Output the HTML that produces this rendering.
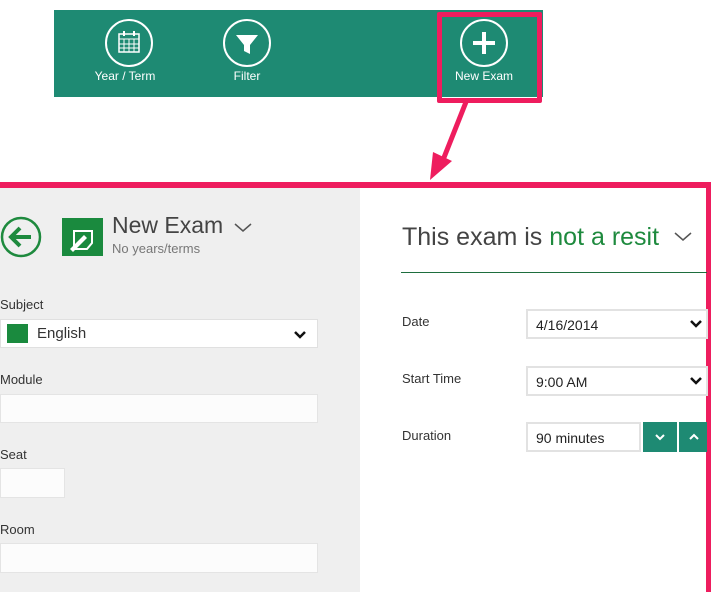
<!DOCTYPE html>
<html><head><style>
*{margin:0;padding:0;box-sizing:border-box}
body{width:711px;height:592px;overflow:hidden;background:#fff;font-family:"Liberation Sans",sans-serif;position:relative}
.a{position:absolute}
.lbl{font-size:13px;color:#333}
.fld{background:#fcfcfc;border:1px solid #e4e4e4}
.sel{background:#fff;border:2px solid #e2e2e2;font-size:14px;color:#222;padding:6px 8px}
.tb{color:#fff;font-size:12px;text-align:center}
</style></head><body>
<div class="a" style="left:54px;top:10px;width:489px;height:87px;background:#1e8a73"></div>
<svg class="a" style="left:54px;top:10px" width="489" height="87" fill="none" stroke="#fff" stroke-width="2">
<circle cx="75" cy="33" r="23"/><rect x="65" y="24" width="20" height="18" stroke-width="1.5"/><path d="M65 29h20M65 34h20M65 38h20M70 29v13M75 29v13M80 29v13" stroke-width="1"/><path d="M70 21v5M80 21v5" stroke-width="2"/>
<circle cx="193" cy="33" r="23"/><path d="M182 25h22l-8 10v9l-6-3v-6z" fill="#fff" stroke="none"/>
<circle cx="430" cy="33" r="23"/><path d="M430 22v22M419 33h22" stroke-width="4"/>
</svg>
<div class="a tb" style="left:85px;top:69px;width:80px">Year / Term</div>
<div class="a tb" style="left:207px;top:69px;width:80px">Filter</div>
<div class="a tb" style="left:444px;top:69px;width:80px">New Exam</div>
<div class="a" style="left:437px;top:12px;width:105px;height:91px;border:5px solid #ee1d5e;border-radius:2px"></div>
<svg class="a" style="left:0;top:0" width="711" height="200"><path d="M466 102L443 160" stroke="#ee1d5e" stroke-width="5"/><path d="M430 180L433 152L452 161z" fill="#ee1d5e"/></svg>
<div class="a" style="left:0;top:188px;width:360px;height:404px;background:#efefef"></div>
<div class="a" style="left:0;top:182px;width:711px;height:6px;background:#ee1d5e"></div>
<div class="a" style="left:706px;top:182px;width:5px;height:410px;background:#ee1d5e"></div>
<svg class="a" style="left:0;top:215px" width="260" height="45"><circle cx="21" cy="22" r="19" fill="none" stroke="#1e8a3e" stroke-width="2.5"/><path d="M31 22H12M20 13l-9 9 9 9" fill="none" stroke="#1e8a3e" stroke-width="4"/>
<rect x="62" y="3" width="41" height="38" fill="#1a8a3e"/>
<path d="M74 16h18v12l-5 6h-13z" fill="none" stroke="#fff" stroke-width="2"/>
<path d="M70 34l14-14 3 3-14 14z" fill="#fff"/>
<path d="M235 9l8 7 8-7" fill="none" stroke="#555" stroke-width="1.5"/></svg>
<div class="a" style="left:112px;top:212px;font-size:23px;color:#444">New Exam</div>
<div class="a" style="left:112px;top:241px;font-size:13px;color:#777">No years/terms</div>
<div class="a lbl" style="left:0;top:297px">Subject</div>
<div class="a" style="left:0;top:319px;width:318px;height:29px;background:#fff;border:1px solid #e0e0e0"></div>
<div class="a" style="left:7px;top:324px;width:21px;height:19px;background:#1a8a3e"></div>
<div class="a" style="left:37px;top:325px;font-size:15px;color:#333">English</div>
<svg class="a" style="left:293px;top:330px" width="14" height="10"><path d="M2 2l5 5 5-5" fill="none" stroke="#111" stroke-width="2.5"/></svg>
<div class="a lbl" style="left:0;top:372px">Module</div>
<div class="a fld" style="left:0;top:394px;width:318px;height:29px"></div>
<div class="a lbl" style="left:0;top:447px">Seat</div>
<div class="a fld" style="left:0;top:468px;width:65px;height:30px"></div>
<div class="a lbl" style="left:0;top:522px">Room</div>
<div class="a fld" style="left:0;top:543px;width:318px;height:30px"></div>
<div class="a" style="left:402px;top:223px;font-size:25px;color:#444">This exam is <span style="color:#1e8a3e">not a resit</span></div>
<svg class="a" style="left:672px;top:230px" width="24" height="14"><path d="M3 3l8 7 8-7" fill="none" stroke="#555" stroke-width="1.5"/></svg>
<div class="a" style="left:401px;top:272px;width:306px;height:1px;background:#1e6e3e"></div>
<div class="a lbl" style="left:402px;top:314px">Date</div>
<div class="a sel" style="left:526px;top:309px;width:182px;height:30px">4/16/2014</div>
<div class="a lbl" style="left:402px;top:371px">Start Time</div>
<div class="a sel" style="left:526px;top:366px;width:182px;height:30px">9:00 AM</div>
<svg class="a" style="left:689px;top:319px" width="14" height="10"><path d="M2 2l5 5 5-5" fill="none" stroke="#111" stroke-width="2.5"/></svg>
<svg class="a" style="left:689px;top:376px" width="14" height="10"><path d="M2 2l5 5 5-5" fill="none" stroke="#111" stroke-width="2.5"/></svg>
<div class="a lbl" style="left:402px;top:428px">Duration</div>
<div class="a sel" style="left:526px;top:422px;width:115px;height:30px">90 minutes</div>
<div class="a" style="left:643px;top:422px;width:34px;height:30px;background:#1e8a73"></div>
<div class="a" style="left:679px;top:422px;width:28px;height:30px;background:#1e8a73"></div>
<svg class="a" style="left:643px;top:422px" width="64" height="30"><path d="M13 13l4 4 4-4" fill="none" stroke="#fff" stroke-width="2"/><path d="M47 17l4-4 4 4" fill="none" stroke="#fff" stroke-width="2"/></svg>
</body></html>
